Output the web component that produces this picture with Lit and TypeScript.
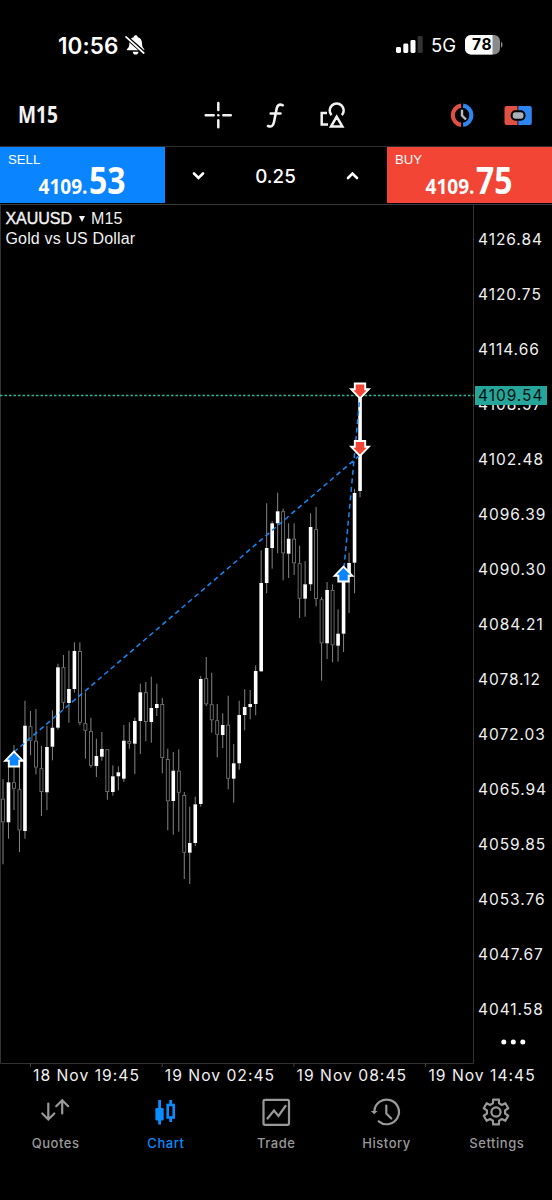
import { LitElement, html, svg, css } from "lit";
import { customElement, property } from "lit/decorators.js";

// [high, body top, body bottom, low, rising]
type Candle = [number, number, number, number, 0 | 1];

const CANDLES: Candle[] = [
  [779, 798.7, 822.3, 864.3, 0], [765, 782.3, 822.3, 838.7, 1], [745, 782.3, 788.7, 810, 0],
  [765, 789.3, 830.3, 852, 0], [700.7, 725.7, 831, 838.7, 1], [711, 726.3, 740.7, 755.3, 0],
  [709, 740.7, 767.5, 774.3, 0], [746, 768.3, 792, 816, 0], [725.7, 747, 792.3, 810, 1],
  [710.3, 727.7, 746.7, 760.3, 1], [663.7, 667.3, 727.7, 729.7, 1], [655, 667.3, 702.7, 709.3, 0],
  [650.7, 689, 703, 722.7, 1], [642.3, 651, 689, 692.7, 1], [642.3, 651, 722.7, 725.3, 0],
  [692.3, 723.3, 730.7, 758.7, 0], [717.7, 731, 765.7, 767.7, 0], [738.7, 756, 766, 777, 1],
  [732, 749, 756.7, 760.7, 1], [749, 749.3, 792, 799.7, 0], [765.3, 776.3, 792, 795.7, 1],
  [766.3, 772.3, 776.3, 790.3, 1], [725, 740.7, 778.7, 782, 1], [722.3, 741, 743.7, 748.7, 0],
  [717.7, 721, 743.7, 774, 1], [683.7, 692.3, 721, 754, 1], [682, 692.3, 722, 741.3, 0],
  [676.7, 708, 722, 742.7, 1], [683.7, 704, 708, 716, 1], [698, 704, 758, 773.3, 0],
  [748.7, 759, 801.3, 830.3, 0], [752, 770.7, 801, 834.7, 1], [749.3, 770.7, 792.7, 831.7, 0],
  [792, 795, 852.7, 879, 0], [806.7, 843, 852.7, 884, 1], [796.7, 804.3, 843, 846, 1],
  [676, 679, 804, 806.7, 1], [657, 678.3, 704.3, 706, 0], [672.7, 704.3, 720.3, 732.7, 0],
  [704, 720.3, 734.7, 757.3, 0], [713.3, 725, 735, 748, 1], [695.7, 724.7, 778.7, 789.3, 0],
  [744, 763.3, 778.7, 802.7, 1], [700.7, 715, 763.3, 769.7, 1], [689.3, 707, 715, 730.3, 1],
  [690, 704, 707, 719.3, 1], [665.3, 671, 704, 715.3, 1], [550.3, 583, 671.3, 672, 1],
  [503.3, 548, 583, 593.3, 1], [521, 523.3, 548, 568.7, 1], [492.7, 511.3, 523.3, 553.3, 1],
  [508.7, 511.3, 553.3, 580.3, 0], [523.3, 538.7, 553.7, 578, 1], [523.3, 538.7, 563.3, 575, 0],
  [545.7, 563.3, 598.7, 618, 0], [561.3, 584.3, 598.7, 616.7, 1], [513.3, 527, 584.3, 591, 1],
  [507, 529.3, 599, 606.3, 0], [597, 599.3, 643.3, 680.7, 0], [582, 590, 643.3, 659, 1],
  [584.3, 590, 645.3, 662.3, 0], [609.3, 633.7, 645.7, 661.7, 1], [575, 577, 633.7, 652, 1],
  [552.7, 563, 577, 613, 1], [488.7, 493, 562.7, 593.3, 1], [395, 395, 491, 497.3, 1],
];

const PRICES = ["4126.84", "4120.75", "4114.66", "4108.57", "4102.48", "4096.39", "4090.30", "4084.21",
  "4078.12", "4072.03", "4065.94", "4059.85", "4053.76", "4047.67", "4041.58"];
const TIMES = ["18 Nov 19:45", "19 Nov 02:45", "19 Nov 08:45", "19 Nov 14:45"];

@customElement("status-bar")
class StatusBar extends LitElement {
  static styles = css`
    :host { display: flex; height: 90px; box-sizing: border-box; padding: 35px 49px 0 58px; align-items: flex-start; color: #fff; font-family: Inter, sans-serif; }
    .time { font-size: 22.5px; line-height: 21px; font-weight: 600; letter-spacing: 0.1px; width: 66px; white-space: nowrap; }
    .spacer { flex: 1; }
    .net { font-size: 18.500px; line-height: 20px; font-weight: 400; letter-spacing: 0; width: 34px; }
    .signal { margin: 1px 8px 0 0; }
    svg { display: block; }
    .pct { font: 700 15.5px Inter, sans-serif; letter-spacing: -0.2px; }
  `;
  render() {
    return html`
      <span class="time">10:56</span>
      <svg width="22" height="22" viewBox="0 0 22 22">
        <path d="M3.5 15.3c-.6 0-.9-.8-.4-1.3 1.5-1.5 2.2-2.4 2.200-4.700C5.300 5.500 6.600 3 9.600 2.300 10 -.3 13.400-.3 13.800 2.300c2.900.7 4.300 3.200 4.300 7 0 2.300.7 3.300 2 4.700.5.500.2 1.300-.4 1.300z" fill="#fff"/>
        <path d="M8.800 16.700h5.600a2.800 2.800 0 0 1-5.600 0z" fill="#fff"/>
        <path d="M1.500 1.300 20.500 18.300" stroke="#000" stroke-width="4"/>
        <path d="M2 1.800 19.700 18" stroke="#fff" stroke-width="1.700" stroke-linecap="round"/>
      </svg>
      <span class="spacer"></span>
      <svg class="signal" width="27" height="18" viewBox="0 0 27 18">
        <rect x="0" y="11" width="5" height="6" rx="1.400" fill="#fff"/>
        <rect x="7.300" y="7.500" width="5" height="9.500" rx="1.400" fill="#fff"/>
        <rect x="14.500" y="4" width="5" height="13" rx="1.400" fill="#fff"/>
        <rect x="21.700" y="0" width="5" height="17" rx="1.400" fill="#333"/>
      </svg>
      <span class="net">5G</span>
      <svg width="38" height="20" viewBox="0 0 38 20">
        <defs><clipPath id="b"><rect width="35" height="19.500" rx="6"/></clipPath></defs>
        <g clip-path="url(#b)"><rect width="35" height="20" fill="#8a8a8a"/><rect width="27.500" height="20" fill="#fff"/></g>
        <path d="M36 6.800c2 .9 2 5.200 0 6z" fill="#8a8a8a"/>
        <text class="pct" x="7" y="15.400" textLength="19.500">78</text>
      </svg>`;
  }
}

@customElement("chart-toolbar")
class ChartToolbar extends LitElement {
  static styles = css`
    :host { display: flex; height: 56px; align-items: center; padding: 0 20.500px 6px 18px; box-sizing: border-box; }
    svg { display: block; flex: none; overflow: visible; }
    .tf { font: 700 23.500px "Open Sans", sans-serif; fill: #f2f2f2; }
    .cross { margin-left: 146px; }
    .fn { margin-left: 33px; }
    .shapes { margin-left: 34px; }
    .spacer { flex: 1; }
    .card { margin-left: 28px; }
  `;
  render() {
    return html`
      <svg width="40" height="28" viewBox="0 0 40 28"><text class="tf" x="0" y="22" textLength="40" lengthAdjust="spacingAndGlyphs">M15</text></svg>
      <svg class="cross" width="28" height="28" viewBox="0 0 28 28" stroke="#f2f2f2" stroke-width="2.500" stroke-linecap="round">
        <path d="M14.300 2v7M14.300 19.300v7M1.700 14.300h8M19.300 14.300h7.500"/><circle cx="14.300" cy="14.300" r="1.300" fill="#f2f2f2" stroke="none"/>
      </svg>
      <svg class="fn" width="20" height="28" viewBox="0 0 20 28" fill="none" stroke="#f2f2f2" stroke-width="2.600" stroke-linecap="round">
        <path d="M17.700 4.200c-3.300-1.300-5.200-.3-6 3.200L9 21c-.8 4-2.700 5.400-6 4M5.700 12.500h9.800"/>
      </svg>
      <svg class="shapes" width="28" height="28" viewBox="0 0 28 28" fill="none" stroke="#f2f2f2" stroke-width="2.500">
        <path d="M8 12H2.700v11.500H9M12.500 14.200a7 7 0 1 1 10.400 0M17.700 15.700l-5.700 9.900h11.400z"/>
      </svg>
      <span class="spacer"></span>
      <svg width="28" height="28" viewBox="0 0 28 28" fill="none">
        <path d="M13.100 4.700a9.700 9.700 0 0 0 0 19.200" stroke="#e05145" stroke-width="4.200"/>
        <path d="M15.100 4.700a9.700 9.700 0 0 1 0 19.200" stroke="#3086f0" stroke-width="4.200"/>
        <path d="M14 8.800v5.700l4 4" stroke="#b4bcc4" stroke-width="2.400"/>
      </svg>
      <svg class="card" width="28" height="28" viewBox="0 0 28 28">
        <path d="M2.500 5h11v19h-11a2 2 0 0 1-2-2V7a2 2 0 0 1 2-2z" fill="#e05145"/>
        <path d="M14.300 5h11.500a2 2 0 0 1 2 2v15a2 2 0 0 1-2 2H14.300z" fill="#3086f0"/>
        <rect x="7.700" y="10.300" width="12.800" height="8.400" rx="3.600" fill="#a8b0b8" stroke="#000" stroke-width="2"/>
      </svg>`;
  }
}

@customElement("price-button")
class PriceButton extends LitElement {
  @property() label = "";
  @property() pips = "";
  static styles = css`
    :host { display: block; width: 165px; height: 56px; color: #fff; padding: 7px 0 0 8px; box-sizing: border-box; }
    .label { font: 13.200px/12px "Liberation Sans", sans-serif; height: 10px; display: block; }
    svg { display: block; overflow: visible; }
    .main { font: 700 22px "Open Sans", sans-serif; fill: #fff; }
    .pips { font: 700 38px "Open Sans", sans-serif; fill: #fff; }
  `;
  render() {
    return html`<span class="label">${this.label}</span>
      <svg width="130" height="36" viewBox="0 0 130 36">
        <text class="main" x="30.500" y="29.500" textLength="49" lengthAdjust="spacingAndGlyphs">4109.</text>
        <text class="pips" x="81" y="29.800" textLength="36.500" lengthAdjust="spacingAndGlyphs">${this.pips}</text>
      </svg>`;
  }
}

@customElement("trade-panel")
class TradePanel extends LitElement {
  static styles = css`
    :host { display: flex; height: 59px; box-sizing: border-box; border-top: 1px solid #2d2d2d; border-bottom: 1px solid #3a3a3a; }
    .sell { background: #0a84ff; }
    .buy { background: #f24535; }
    .lot { flex: 1; display: flex; align-items: center; justify-content: space-between; padding: 0 27px 0 26px; color: #fff; font: 500 18.800px Inter, sans-serif; }
    .lot svg { display: block; }
    .volume { padding-top: 2px; }
  `;
  render() {
    const chevron = (d: string) => html`<svg width="15" height="12" viewBox="0 0 15 12" fill="none" stroke="#fff" stroke-width="2.600" stroke-linecap="round"><path d=${d}/></svg>`;
    return html`
      <price-button class="sell" label="SELL" pips="53"></price-button>
      <div class="lot">${chevron("M3 3.500l4.500 4.500L12 3.500")}<span class="volume">0.25</span>${chevron("M3 8l4.500-4.500L12 8")}</div>
      <price-button class="buy" label="BUY" pips="75"></price-button>`;
  }
}

@customElement("price-chart")
class PriceChart extends LitElement {
  static styles = css`
    :host { display: grid; grid-template-columns: 474px 1fr; grid-template-rows: 859px 24px; color: #fff; position: relative; }
    .plot { grid-area: 1 / 1; display: block; box-sizing: border-box; }
    .title { grid-area: 1 / 1; padding: 4px 0 0 5.500px; font: 16px/20px "Liberation Sans", sans-serif; letter-spacing: 0.150px; color: #f2f2f2; z-index: 1; }
    .name { letter-spacing: -0.050px; -webkit-text-stroke: 0.4px #f2f2f2; }
    .tri { display: inline-block; width: 0; height: 0; border: 3.500px solid transparent; border-top: 6px solid #f2f2f2; border-bottom: 0; margin: 0 2px 2px 2px; }
    .prices { grid-area: 1 / 2; display: flex; flex-direction: column; padding-top: 7px; font: 15.500px/55px Inter, sans-serif; letter-spacing: 0.950px; }
    .price { height: 55px; padding-left: 4px; color: #f0f0f0; white-space: nowrap; }
    .times { grid-area: 2 / 1 / 3 / 3; display: flex; padding-left: 33px; font: 15.700px/23px Inter, sans-serif; letter-spacing: 1px; }
    .when { width: 131.800px; flex: none; white-space: nowrap; color: #f0f0f0; }
    .now { position: absolute; left: 475px; top: 181px; width: 71.500px; height: 19px; padding-left: 3px; box-sizing: border-box; background: #26a69a; color: #06110f; font: 15.500px/19px Inter, sans-serif; letter-spacing: 0.950px; }
    .more { position: absolute; left: 500px; top: 834px; }
  `;
  arrow(x: number, y: number, up: boolean) {
    return svg`<path transform="translate(${x} ${y}) scale(1 ${up ? 1 : -1})" d="M0 -7.800 L8.800 1.200 H5.200 V7 H-5.200 V1.200 H-8.800 Z" fill=${up ? "#0a84ff" : "#f24535"} stroke="#fff" stroke-width="1.900"/>`;
  }
  candle([high, top, bottom, low, rising]: Candle, i: number) {
    const x = 3 + i * 5.493;
    return svg`
      <path d="M${x} ${high}V${top}M${x} ${bottom}V${low}" stroke="#858585" stroke-width="1"/>
      ${rising
        ? svg`<rect x=${x - 1.8} y=${top} width="3.600" height=${bottom - top} fill="#fff"/>`
        : svg`<rect x=${x - 1.5} y=${top + 0.4} width="3" height=${Math.max(bottom - top - 0.8, 1)} fill="#000" stroke="#808080" stroke-width=".8"/>`}`;
  }
  render() {
    return html`
      <svg class="plot" width="474" height="866" viewBox="0 205 474 866">
        ${CANDLES.map((c, i) => this.candle(c, i))}
        <path d="M.5 205V1063.500H473.500V205" fill="none" stroke="#333"/>
        ${PRICES.map((_, i) => svg`<path d=${`M473 ${239.500 + i * 55}h2`} stroke="#444"/>`)}
        ${TIMES.map((_, i) => svg`<path d=${`M${30.500 + i * 131.700} 1063v4`} stroke="#444"/>`)}
        <path d="M0 395.500H474" stroke="#2bb896" stroke-width="1.500" stroke-dasharray="2.500 2"/>
        <path d="M14 752L360 455M344 568L360 395" fill="none" stroke="#1688f5" stroke-width="1.500" stroke-dasharray="5 3.500"/>
        ${this.arrow(14, 759.5, true)}${this.arrow(343.5, 574.5, true)}${this.arrow(360, 390.5, false)}${this.arrow(360, 448, false)}
      </svg>
      <div class="title"><span class="name">XAUUSD</span> <i class="tri"></i> M15<br />Gold vs US Dollar</div>
      <div class="prices">${PRICES.map((p) => html`<span class="price">${p}</span>`)}</div>
      <div class="times">${TIMES.map((t) => html`<span class="when">${t}</span>`)}</div>
      <span class="now">4109.54</span>
      <svg class="more" width="26" height="6" fill="#fff"><circle cx="3.800" cy="3" r="2.500"/><circle cx="13.300" cy="3" r="2.500"/><circle cx="22.800" cy="3" r="2.500"/></svg>`;
  }
}

@customElement("tab-bar")
class TabBar extends LitElement {
  static styles = css`
    :host { display: grid; grid-template-columns: repeat(5, 110.300px); height: 112px; padding-top: 8px; box-sizing: border-box; }
    .tab { display: flex; flex-direction: column; align-items: center; gap: 6px; color: #999; font: 500 13px/18px Inter, sans-serif; letter-spacing: 0.550px; }
    .active { color: #0a8cff; }
    svg { display: block; overflow: visible; }
    .label { margin-right: -1px; }
  `;
  render() {
    const gear = Array.from({ length: 6 }, (_, i) => {
      const a = (i * 60 - 90) * Math.PI / 180;
      const p = (r: number, d: number) => `${(15 + r * Math.cos(a + d)).toFixed(2)} ${(16 + r * Math.sin(a + d)).toFixed(2)}`;
      return `${i ? "L" : "M"}${p(9.2, -0.34)}L${p(12.8, -0.23)}L${p(12.8, 0.23)}L${p(9.2, 0.34)}`;
    }).join("") + "Z";
    const tabs = [
      ["Quotes", svg`<path d="M8.300 7.500v15.500M2.300 17.500l6 6 6-6M22.200 17.500V4.500M16.200 10.200l6-6 6 6"/>`],
      ["Chart", svg`<path d="M9.600 4v24.500M20.700 4v22" stroke-width="2.800" stroke-linecap="butt"/><rect x="5.400" y="12" width="8.300" height="12.500" rx="1.200" fill="currentColor" stroke="none"/><rect x="17.700" y="9" width="6" height="12.500" fill="#000" stroke-width="2.600"/>`],
      ["Trade", svg`<rect x="2.500" y="3.800" width="25.500" height="25" rx="1.500"/><path d="M6.500 22.500l6.500-8 4.500 5.500 7-10"/>`],
      ["History", svg`<path d="M3.400 14.800a12.300 12.300 0 1 1 4.300 10.500M15.300 9.500v8l5 5"/><path d="M-.2 15h6.800l-3.400 3.200z" fill="currentColor" stroke="none"/>`],
      ["Settings", svg`<path d=${gear} stroke-linejoin="round"/><circle cx="15" cy="16" r="4.600"/>`],
    ] as const;
    return html`${tabs.map(([name, icon]) => html`<div class="tab ${name === "Chart" ? "active" : ""}">
      <svg width="30" height="32" viewBox="0 0 30 32" fill="none" stroke="currentColor" stroke-width="2.200" stroke-linecap="round">${icon}</svg><span class="label">${name}</span></div>`)}`;
  }
}

@customElement("app-root")
class AppRoot extends LitElement {
  static styles = css`
    :host { display: flex; flex-direction: column; width: 552px; height: 1200px; background: #000; overflow: hidden; }
  `;
  render() {
    return html`<status-bar></status-bar><chart-toolbar></chart-toolbar><trade-panel></trade-panel><price-chart></price-chart><tab-bar></tab-bar>`;
  }
}
